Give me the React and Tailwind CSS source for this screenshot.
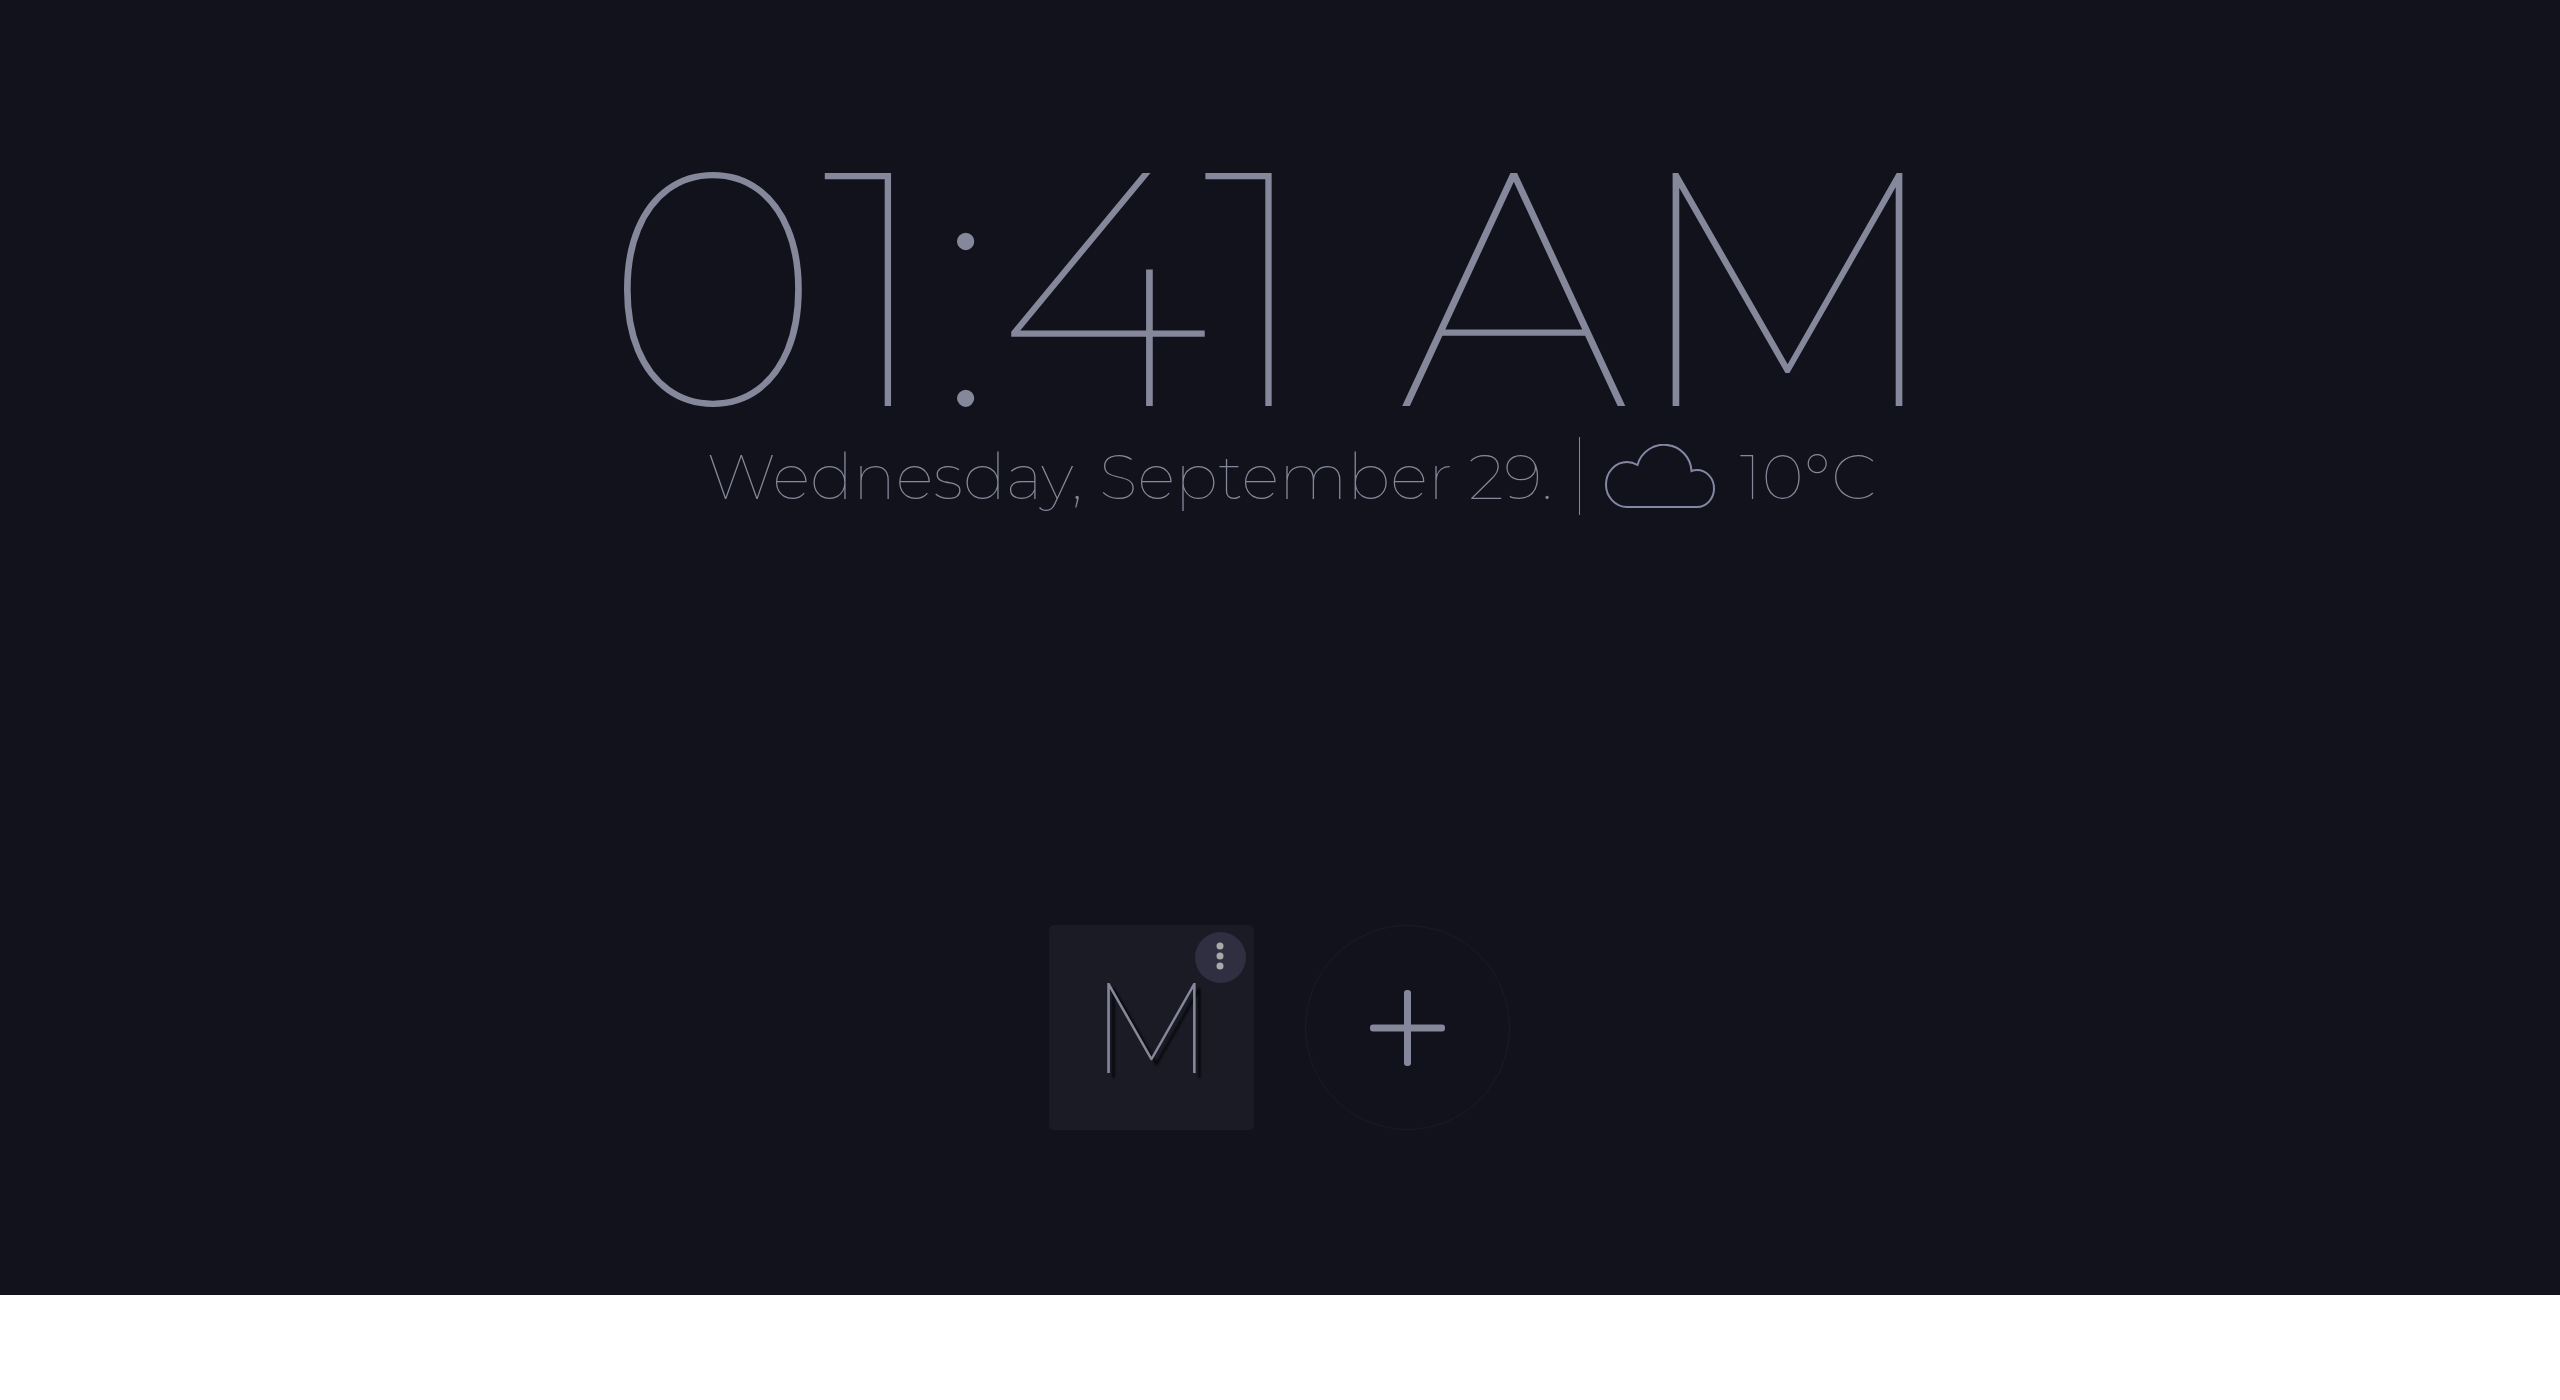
function CloudIcon() {
  return (
    <svg
      width="110"
      height="64"
      viewBox="0 0 110 64"
      fill="none"
      stroke="currentColor"
      strokeWidth="2"
      className="shrink-0 text-[#8387a3]"
      aria-hidden="true"
    >
      <path d="M22 63 A21 22.500 0 0 1 22 18 Q27.500 18 32.500 21 A27.500 27.500 0 0 1 86.500 27 Q89 26 92 26 A17 18.500 0 0 1 92 63 Z" />
    </svg>
  );
}

function PlusIcon() {
  return (
    <svg width="75" height="76" viewBox="0 0 75 76" fill="currentColor" aria-hidden="true">
      <rect x="34" y="0" width="7" height="76" rx="3" />
      <rect x="0" y="34.500" width="75" height="7" rx="3" />
    </svg>
  );
}

function DotsIcon() {
  return (
    <svg width="8" height="28" viewBox="0 0 8 28" fill="currentColor" aria-hidden="true">
      <circle cx="4" cy="4" r="3.500" />
      <circle cx="4" cy="14" r="3.500" />
      <circle cx="4" cy="24" r="3.500" />
    </svg>
  );
}

export default function App() {
  return (
    <main className="flex flex-col items-center bg-[#12121c] pt-[137px] pr-px pb-[165px] font-['Montserrat','Inter',sans-serif] font-thin text-[#84889a]">
      <time className="pr-2 text-[333px] leading-[300px] whitespace-nowrap">01:41 AM</time>

      <div className="flex items-center pl-6 text-[64px] leading-[78px] whitespace-nowrap">
        <p>Wednesday, September 29.</p>
        <div className="ml-[26px] flex items-center border-l border-[#84889a] pl-[25px]">
          <CloudIcon />
          <span className="ml-[25px]">10°C</span>
        </div>
      </div>

      <div className="mt-[410px] flex gap-[51px]">
        <div className="relative size-[205px]">
          <a
            href="#mail"
            className="flex size-full items-center justify-center rounded-[5px] bg-[#1b1b26] pb-0.5 text-[128px] leading-none [text-shadow:5px_5px_2px_#08080c]"
          >
            M
          </a>
          <button
            type="button"
            aria-label="Options"
            className="absolute top-[7px] right-2 flex size-[51px] items-center justify-center rounded-full bg-[#2f2f41] pr-0.5 pb-1 text-[#a9a9a9]"
          >
            <DotsIcon />
          </button>
        </div>
        <button
          type="button"
          aria-label="Add"
          className="flex size-[205px] items-center justify-center rounded-full border border-[#1b1b26]"
        >
          <PlusIcon />
        </button>
      </div>
    </main>
  );
}
